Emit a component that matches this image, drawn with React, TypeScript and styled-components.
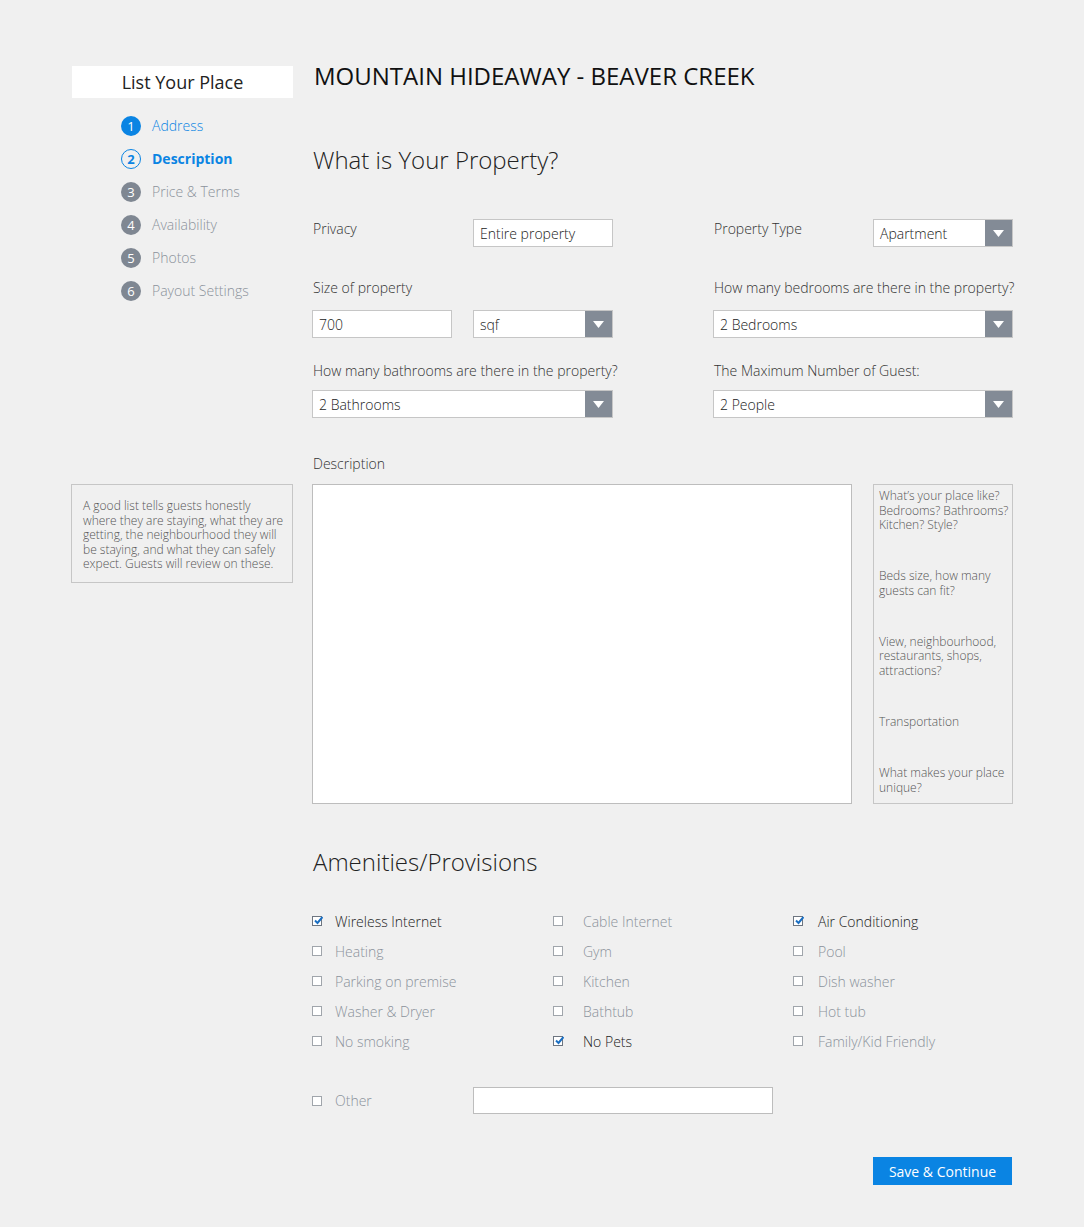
import React from "react";
import styled, { createGlobalStyle } from "styled-components";

const GlobalStyle = createGlobalStyle`
  body {
    margin: 0;
    background: #f0f0f0;
    font-family: "Open Sans", "Noto Sans", sans-serif;
    color: #333;
  }
`;

type StepState = "done" | "current" | "todo";

const steps: { label: string; state: StepState }[] = [
  { label: "Address", state: "done" },
  { label: "Description", state: "current" },
  { label: "Price & Terms", state: "todo" },
  { label: "Availability", state: "todo" },
  { label: "Photos", state: "todo" },
  { label: "Payout Settings", state: "todo" },
];

const hints = [
  "What’s your place like? Bedrooms? Bathrooms? Kitchen? Style?",
  "Beds size, how many guests can fit?",
  "View, neighbourhood, restaurants, shops, attractions?",
  "Transportation",
  "What makes your place unique?",
];

const amenities: { label: string; checked?: boolean }[] = [
  { label: "Wireless Internet", checked: true },
  { label: "Cable Internet" },
  { label: "Air Conditioning", checked: true },
  { label: "Heating" },
  { label: "Gym" },
  { label: "Pool" },
  { label: "Parking on premise" },
  { label: "Kitchen" },
  { label: "Dish washer" },
  { label: "Washer & Dryer" },
  { label: "Bathtub" },
  { label: "Hot tub" },
  { label: "No smoking" },
  { label: "No Pets", checked: true },
  { label: "Family/Kid Friendly" },
];

// label offset differs a little per column in the mockup
const columnGaps = [13, 20, 15];

const Select: React.FC<{ value: string; width?: number }> = ({ value, width }) => (
  <SelectBox $width={width}>
    <SelectValue>{value}</SelectValue>
    <SelectArrow>
      <svg width="11" height="7" viewBox="0 0 11 7">
        <polygon points="0,0 11,0 5.5,7" fill="#fff" />
      </svg>
    </SelectArrow>
  </SelectBox>
);

const Check: React.FC<{ checked?: boolean; label: string; gap?: number }> = ({
  checked,
  label,
  gap = 13,
}) => (
  <CheckRow $gap={gap}>
    <CheckBox $checked={checked}>
      {checked && (
        <svg width="9" height="9" viewBox="0 0 9 9">
          <path d="M1 4.5 L3.5 7 L8.5 1" stroke="#1b6fc2" strokeWidth="2" fill="none" />
        </svg>
      )}
    </CheckBox>
    <CheckLabel $checked={checked}>{label}</CheckLabel>
  </CheckRow>
);

export default function App() {
  return (
    <>
      <GlobalStyle />
      <Page>
        <Sidebar>
          <SideHeader>List Your Place</SideHeader>
          <Steps>
            {steps.map((s, i) => (
              <Step key={s.label}>
                <StepDot $state={s.state}>{i + 1}</StepDot>
                <StepLabel $state={s.state}>{s.label}</StepLabel>
              </Step>
            ))}
          </Steps>
        </Sidebar>

        <Main>
          <Title>MOUNTAIN HIDEAWAY - BEAVER CREEK</Title>
          <Heading $mt={59}>What is Your Property?</Heading>

          <FormRow $mt={44}>
            <InlineField>
              <Label>Privacy</Label>
              <TextBox>Entire property</TextBox>
            </InlineField>
            <InlineField>
              <Label>Property Type</Label>
              <Select value="Apartment" width={140} />
            </InlineField>
          </FormRow>

          <FormRow $mt={31}>
            <StackField $gap={12}>
              <Label>Size of property</Label>
              <Pair>
                <TextBox>700</TextBox>
                <Select value="sqf" width={140} />
              </Pair>
            </StackField>
            <StackField $gap={12}>
              <Label>How many bedrooms are there in the property?</Label>
              <Select value="2 Bedrooms" />
            </StackField>
          </FormRow>

          <FormRow $mt={23}>
            <StackField $gap={9}>
              <Label>How many bathrooms are there in the property?</Label>
              <Select value="2 Bathrooms" />
            </StackField>
            <StackField $gap={9}>
              <Label>The Maximum Number of Guest:</Label>
              <Select value="2 People" />
            </StackField>
          </FormRow>
        </Main>

        <TipCol>
          <TipBox>
            A good list tells guests honestly where they are staying, what they are
            getting, the neighbourhood they will be staying, and what they can safely
            expect. Guests will review on these.
          </TipBox>
        </TipCol>

        <Lower>
          <Label>Description</Label>
          <DescRow>
            <TextArea />
            <HintBox>
              {hints.map((h) => (
                <Hint key={h}>{h}</Hint>
              ))}
            </HintBox>
          </DescRow>

          <Heading $mt={43}>Amenities/Provisions</Heading>
          <AmenityGrid>
            {amenities.map((a, i) => (
              <Check key={a.label} label={a.label} checked={a.checked} gap={columnGaps[i % 3]} />
            ))}
          </AmenityGrid>

          <OtherRow>
            <Check label="Other" />
            <OtherInput />
          </OtherRow>

          <Actions>
            <SaveButton>Save &amp; Continue</SaveButton>
          </Actions>
        </Lower>
      </Page>
    </>
  );
}

const Page = styled.div`
  display: grid;
  grid-template-columns: 222px 701px;
  grid-template-areas:
    "side main"
    "tip lower";
  column-gap: 19px;
  padding: 66px 0 42px 71px;
`;

const Sidebar = styled.aside`
  grid-area: side;
  padding-left: 1px;
`;

const SideHeader = styled.div`
  height: 32px;
  background: #fff;
  display: flex;
  align-items: center;
  justify-content: center;
  font-size: 18px;
  color: #222;
`;

const Steps = styled.ul`
  list-style: none;
  margin: 11px 0 0;
  padding: 0 0 0 49px;
`;

const Step = styled.li`
  display: flex;
  align-items: center;
  height: 33px;
  gap: 11px;
`;

const StepDot = styled.span<{ $state: StepState }>`
  width: 20px;
  height: 20px;
  box-sizing: border-box;
  border-radius: 50%;
  display: flex;
  align-items: center;
  justify-content: center;
  font-size: 13px;
  background: ${(p) =>
    p.$state === "done" ? "#0a84e3" : p.$state === "current" ? "transparent" : "#7f8792"};
  border: ${(p) => (p.$state === "current" ? "1.5px solid #0a84e3" : "none")};
  color: ${(p) => (p.$state === "current" ? "#0a84e3" : "#fff")};
  font-weight: ${(p) => (p.$state === "current" ? 700 : 400)};
`;

const StepLabel = styled.span<{ $state: StepState }>`
  font-size: 14px;
  color: ${(p) => (p.$state === "todo" ? "#8b929b" : "#0a84e3")};
  font-weight: ${(p) => (p.$state === "current" ? 700 : 300)};
`;

const Main = styled.main`
  grid-area: main;
`;

const Title = styled.h1`
  margin: 0;
  padding-left: 2px;
  font-size: 24px;
  line-height: 20px;
  font-weight: 400;
  color: #111;
`;

const Heading = styled.h2<{ $mt: number }>`
  margin: ${(p) => p.$mt}px 0 0;
  padding-left: 1px;
  font-size: 24px;
  line-height: 30px;
  font-weight: 300;
  color: #222;
`;

const FormRow = styled.div<{ $mt: number }>`
  display: grid;
  grid-template-columns: 301px 300px;
  column-gap: 100px;
  margin-top: ${(p) => p.$mt}px;
`;

const InlineField = styled.div`
  display: flex;
  justify-content: space-between;
  align-items: flex-start;
`;

const StackField = styled.div<{ $gap: number }>`
  display: flex;
  flex-direction: column;
  gap: ${(p) => p.$gap}px;
`;

const Label = styled.span`
  display: block;
  font-size: 14px;
  font-weight: 300;
  line-height: 20px;
  color: #333;
  padding-left: 1px;
  white-space: nowrap;
`;

const Pair = styled.div`
  display: flex;
  justify-content: space-between;
`;

const TextBox = styled.div`
  box-sizing: border-box;
  width: 140px;
  height: 28px;
  background: #fff;
  border: 1px solid #c6c6c6;
  padding: 0 6px;
  display: flex;
  align-items: center;
  font-size: 14px;
  font-weight: 300;
  color: #222;
`;

const SelectBox = styled.div<{ $width?: number }>`
  box-sizing: border-box;
  width: ${(p) => (p.$width ? `${p.$width}px` : "100%")};
  height: 28px;
  background: #fff;
  border: 1px solid #c6c6c6;
  display: flex;
  align-items: stretch;
`;

const SelectValue = styled.span`
  flex: 1;
  display: flex;
  align-items: center;
  padding-left: 6px;
  font-size: 14px;
  font-weight: 300;
  color: #222;
`;

const SelectArrow = styled.span`
  width: 27px;
  background: #838b96;
  display: flex;
  align-items: center;
  justify-content: center;
`;

const TipCol = styled.div`
  grid-area: tip;
  padding-top: 66px;
`;

const TipBox = styled.div`
  box-sizing: border-box;
  border: 1px solid #c6c6c6;
  padding: 14px 8px 12px 11px;
  height: 99px;
  font-size: 12px;
  font-weight: 300;
  line-height: 14.5px;
  color: #555;
`;

const Lower = styled.section`
  grid-area: lower;
  padding-top: 36px;
`;

const DescRow = styled.div`
  display: flex;
  gap: 21px;
  margin-top: 10px;
`;

const TextArea = styled.div`
  box-sizing: border-box;
  width: 540px;
  height: 320px;
  background: #fff;
  border: 1px solid #bdbdbd;
`;

const HintBox = styled.div`
  box-sizing: border-box;
  width: 140px;
  height: 320px;
  border: 1px solid #c6c6c6;
  padding: 4px 2px 8px 5px;
  display: flex;
  flex-direction: column;
  justify-content: space-between;
`;

const Hint = styled.p`
  margin: 0;
  font-size: 12px;
  font-weight: 300;
  line-height: 14.5px;
  color: #555;
`;

const AmenityGrid = styled.div`
  display: grid;
  grid-template-columns: 241px 240px 220px;
  grid-auto-rows: 30px;
  margin-top: 29px;
`;

const CheckRow = styled.label<{ $gap: number }>`
  display: flex;
  align-items: center;
  gap: ${(p) => p.$gap}px;
`;

const CheckBox = styled.span<{ $checked?: boolean }>`
  box-sizing: border-box;
  width: 10px;
  height: 10px;
  border: 1px solid ${(p) => (p.$checked ? "#6d7580" : "#a0a5ab")};
  background: #fff;
  display: flex;
  align-items: center;
  justify-content: center;
  & svg {
    margin-top: -2px;
    margin-right: -2px;
  }
`;

const CheckLabel = styled.span<{ $checked?: boolean }>`
  font-size: 14px;
  font-weight: 300;
  color: ${(p) => (p.$checked ? "#222" : "#8b929b")};
`;

const OtherRow = styled.div`
  display: grid;
  grid-template-columns: 161px 300px;
  align-items: center;
  margin-top: 31px;
`;

const OtherInput = styled.div`
  box-sizing: border-box;
  height: 27px;
  background: #fff;
  border: 1px solid #bdbdbd;
`;

const Actions = styled.div`
  display: flex;
  justify-content: flex-end;
  margin-top: 43px;
  padding-right: 1px;
`;

const SaveButton = styled.button`
  width: 139px;
  height: 28px;
  border: none;
  background: #0a84e3;
  color: #fff;
  font-family: "Open Sans", sans-serif;
  font-size: 14px;
  cursor: pointer;
`;
